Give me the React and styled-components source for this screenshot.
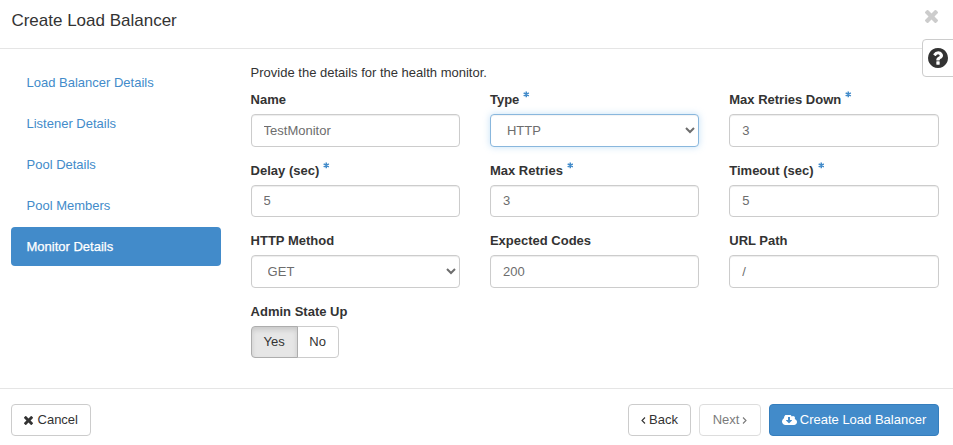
import React from "react";
import styled, { createGlobalStyle, css } from "styled-components";

const GlobalStyle = createGlobalStyle`
  *, *::before, *::after { box-sizing: border-box; }
  body {
    margin: 0;
    background: #fff;
    color: #333;
    font: 13px/18.57px "Liberation Sans", Arial, sans-serif;
    overflow: hidden;
  }
`;

const Dialog = styled.div`
  display: flex;
  flex-direction: column;
  height: 445px;
  position: relative;
`;

const Header = styled.header`
  display: flex;
  justify-content: space-between;
  flex: none;
  height: 49px;
  padding: 10px 14px 0 11.4px;
  border-bottom: 1px solid #e5e5e5;
`;

const Title = styled.h1`
  margin: 0;
  font-size: 17px;
  font-weight: 400;
  line-height: 22px;
`;

const CloseButton = styled.button`
  display: flex;
  width: 14px;
  height: 14px;
  padding: 0;
  border: 0;
  background: none;
  color: #ccc;
`;

const HelpButton = styled.button`
  position: absolute;
  top: 39px;
  right: -1px;
  display: flex;
  align-items: center;
  justify-content: center;
  width: 32px;
  height: 38px;
  padding: 0;
  border: 1px solid #ccc;
  border-radius: 4px 0 0 4px;
  background: #fff;
  color: #333;
`;

const Body = styled.div`
  display: flex;
  flex: 1;
  gap: 29.6px;
  padding: 14px 14.4px 0 11px;
`;

const Steps = styled.nav`
  display: flex;
  flex-direction: column;
  flex: none;
  gap: 2px;
  width: 210px;
`;

const Step = styled.a`
  height: 39px;
  padding: 11px 15.5px 9px;
  border-radius: 4px;
  color: ${(p) => (p.$active ? "#fff" : "#428bca")};
  background: ${(p) => (p.$active ? "#428bca" : "transparent")};
  -webkit-text-stroke: ${(p) => (p.$active ? "0.25px #fff" : "0")};
`;

const Form = styled.form`
  flex: 1;
  min-width: 0;
`;

const Intro = styled.p`
  margin: 0;
  height: 28px;
  padding-top: 1px;
`;

const Fields = styled.div`
  display: grid;
  grid-template-columns: repeat(3, 1fr);
  grid-auto-rows: 70.6px;
  column-gap: 30px;
`;

const Field = styled.div`
  display: flex;
  flex-direction: column;
`;

const Label = styled.label`
  display: flex;
  gap: 4px;
  height: 23px;
  line-height: 18px;
  font-weight: 700;
`;

const Required = styled.span`
  display: flex;
  height: 7px;
  color: #428bca;
`;

const controlStyle = css`
  display: block;
  width: 100%;
  height: 32.57px;
  padding: 6px 12px;
  border: 1px solid #ccc;
  border-radius: 4px;
  outline: 0;
  background: #fff;
  color: #6d6d6d;
  font: inherit;
  box-shadow: inset 0 1px 1px rgba(0, 0, 0, 0.075);
`;

const Input = styled.input`
  ${controlStyle}
`;

const Select = styled.select`
  ${controlStyle}
  padding-right: 13px;
  ${(p) =>
    p.$focused &&
    css`
      border-color: #89b7dd;
      box-shadow: inset 0 1px 1px rgba(0, 0, 0, 0.05), 0 0 7px rgba(102, 175, 233, 0.38);
    `}
`;

const Toggle = styled.div`
  display: flex;
`;

const Button = styled.button`
  display: flex;
  align-items: center;
  justify-content: center;
  gap: ${(p) => p.$gap ?? 3}px;
  width: ${(p) => p.$width}px;
  height: 32px;
  padding: 0;
  border: 1px solid ${(p) => (p.$primary ? "#357ebd" : "#ccc")};
  border-radius: 4px;
  background: ${(p) => (p.$primary ? "#428bca" : "#fff")};
  color: ${(p) => (p.$primary ? "#fff" : "#333")};
  font: inherit;
  white-space: nowrap;
  opacity: ${(p) => (p.$dim ? 0.65 : 1)};
`;

const ToggleButton = styled(Button)`
  &:first-child {
    border-radius: 4px 0 0 4px;
  }
  &:last-child {
    margin-left: -1px;
    border-radius: 0 4px 4px 0;
  }
  ${(p) =>
    p.$active &&
    css`
      z-index: 1;
      border-color: #adadad;
      background: #e6e6e6;
      box-shadow: inset 0 3px 5px rgba(0, 0, 0, 0.125);
    `}
`;

const Footer = styled.footer`
  display: flex;
  flex: none;
  justify-content: space-between;
  height: 57px;
  padding: 15px 14px 0 11px;
  border-top: 1px solid #e5e5e5;
`;

const Actions = styled.div`
  display: flex;
  gap: 8px;
`;

const Glyph = styled.svg`
  display: block;
  flex: none;
  fill: currentColor;
`;

const TimesIcon = ({ size }) => (
  <Glyph width={size} height={size} viewBox="302 366 1188 1188">
    <path d="M1490 1322q0 40-28 68l-136 136q-28 28-68 28t-68-28l-294-294-294 294q-28 28-68 28t-68-28l-136-136q-28-28-28-68t28-68l294-294-294-294q-28-28-28-68t28-68l136-136q28-28 68-28t68 28l294 294 294-294q28-28 68-28t68 28l136 136q28 28 28 68t-28 68l-294 294 294 294q28 28 28 68z" />
  </Glyph>
);

const HelpIcon = () => (
  <Glyph width="20" height="20" viewBox="128 128 1536 1536">
    <path d="M1024 1376v-192q0-14-9-23t-23-9h-192q-14 0-23 9t-9 23v192q0 14 9 23t23 9h192q14 0 23-9t9-23zm256-672q0-88-55.500-163t-138.500-116-170-41q-243 0-371 213-15 24 8 42l132 100q7 6 19 6 16 0 25-12 53-68 86-92 34-24 86-24 48 0 85.500 26t37.500 59q0 38-20 61t-68 45q-63 28-115.500 86.500t-52.500 125.500v36q0 14 9 23t23 9h192q14 0 23-9t9-23q0-19 21.500-49.500t54.500-49.500q32-18 49-28.500t46-35 44.500-48 28-60.500 12.500-81zm384 192q0 209-103 385.500t-279.500 279.500-385.500 103-385.500-103-279.500-279.500-103-385.500 103-385.500 279.500-279.500 385.500-103 385.500 103 279.500 279.500 103 385.500z" />
  </Glyph>
);

const CloudIcon = () => (
  <Glyph width="15" height="10" viewBox="-64 256 1920 1280">
    <path d="M1216 928q0-14-9-23t-23-9h-224v-352q0-13-9.500-22.500t-22.500-9.500h-192q-13 0-22.500 9.500t-9.500 22.500v352h-224q-13 0-22.500 9.500t-9.500 22.500q0 14 9 23l352 352q9 9 23 9t23-9l351-351q10-12 10-24zm640 224q0 159-112.500 271.500t-271.500 112.500h-1088q-185 0-316.500-131.500t-131.500-316.500q0-130 70-240t188-165q-2-30-2-43 0-212 150-362t362-150q156 0 285.500 87t188.500 231q71-62 166-62 106 0 181 75t75 181q0 76-41 138 130 31 213.500 135.500t83.500 238.500z" />
  </Glyph>
);

const StarIcon = () => (
  <Glyph width="6.500" height="7" viewBox="0 0 7 7">
    <path d="M3.500 .3v6.200M.7 1.800l5.600 3.200M6.300 1.800L.7 5" stroke="currentColor" strokeWidth="1.600" />
  </Glyph>
);

const AngleIcon = ({ d }) => (
  <Glyph width="5" height="7" viewBox="0 0 5 7">
    <path d={d} fill="none" stroke="currentColor" strokeWidth="1.100" />
  </Glyph>
);

const steps = ["Load Balancer Details", "Listener Details", "Pool Details", "Pool Members", "Monitor Details"];

const fields = [
  { label: "Name", value: "TestMonitor" },
  { label: "Type", value: "HTTP", required: true, select: true, focused: true },
  { label: "Max Retries Down", value: "3", required: true },
  { label: "Delay (sec)", value: "5", required: true },
  { label: "Max Retries", value: "3", required: true },
  { label: "Timeout (sec)", value: "5", required: true },
  { label: "HTTP Method", value: "GET", select: true },
  { label: "Expected Codes", value: "200" },
  { label: "URL Path", value: "/" },
];

export default function App() {
  return (
    <Dialog>
      <GlobalStyle />
      <Header>
        <Title>Create Load Balancer</Title>
        <CloseButton aria-label="Close">
          <TimesIcon size={13} />
        </CloseButton>
      </Header>
      <HelpButton aria-label="Help">
        <HelpIcon />
      </HelpButton>
      <Body>
        <Steps>
          {steps.map((name) => (
            <Step key={name} $active={name === "Monitor Details"}>
              {name}
            </Step>
          ))}
        </Steps>
        <Form>
          <Intro>Provide the details for the health monitor.</Intro>
          <Fields>
            {fields.map((f) => (
              <Field key={f.label}>
                <Label>
                  {f.label}
                  {f.required && (
                    <Required>
                      <StarIcon />
                    </Required>
                  )}
                </Label>
                {f.select ? (
                  <Select $focused={f.focused} defaultValue={f.value}>
                    <option>{f.value}</option>
                  </Select>
                ) : (
                  <Input defaultValue={f.value} />
                )}
              </Field>
            ))}
            <Field>
              <Label>Admin State Up</Label>
              <Toggle>
                <ToggleButton type="button" $active $width={47}>
                  Yes
                </ToggleButton>
                <ToggleButton type="button" $width={42}>
                  No
                </ToggleButton>
              </Toggle>
            </Field>
          </Fields>
        </Form>
      </Body>
      <Footer>
        <Button $width={80} $gap={4.5}>
          <TimesIcon size={9} />
          Cancel
        </Button>
        <Actions>
          <Button $width={63}>
            <AngleIcon d="M4 .5L1 3.500l3 3" />
            Back
          </Button>
          <Button $width={62} $dim>
            Next
            <AngleIcon d="M1 .5l3 3-3 3" />
          </Button>
          <Button $width={170} $primary>
            <CloudIcon />
            Create Load Balancer
          </Button>
        </Actions>
      </Footer>
    </Dialog>
  );
}
